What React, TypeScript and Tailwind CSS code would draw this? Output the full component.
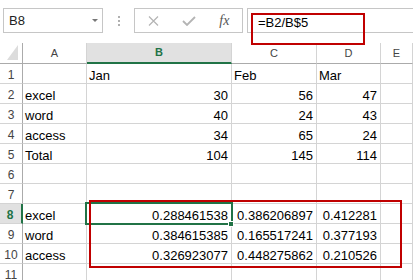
import React from "react";

type Row = { n: number; cells: string[] };

const rows: Row[] = [
  { n: 1, cells: ["", "Jan", "Feb", "Mar", ""] },
  { n: 2, cells: ["excel", "30", "56", "47", ""] },
  { n: 3, cells: ["word", "40", "24", "43", ""] },
  { n: 4, cells: ["access", "34", "65", "24", ""] },
  { n: 5, cells: ["Total", "104", "145", "114", ""] },
  { n: 6, cells: ["", "", "", "", ""] },
  { n: 7, cells: ["", "", "", "", ""] },
  { n: 8, cells: ["excel", "0.288461538", "0.386206897", "0.412281", ""] },
  { n: 9, cells: ["word", "0.384615385", "0.165517241", "0.377193", ""] },
  { n: 10, cells: ["access", "0.326923077", "0.448275862", "0.210526", ""] },
  { n: 11, cells: ["", "", "", "", ""] },
];

const letters = ["A", "B", "C", "D", "E"];
const isNum = (v: string) => /^[\d.]+$/.test(v);

function FormulaBar() {
  return (
    <div className="h-[43px] flex items-start pt-[8px]">
      {/* Name box */}
      <div className="ml-[3px] w-[100px] h-[25px] border border-[#c6c6c6] flex items-center justify-between pl-[5px] pr-[4px] text-[13px] text-[#222]">
        <span>B8</span>
        <svg width="6" height="3" viewBox="0 0 6 3">
          <path d="M0 0H6L3 3Z" fill="#777" />
        </svg>
      </div>
      {/* grip */}
      <div className="w-[31px] h-[25px] flex items-center justify-center">
        <svg width="2" height="10" viewBox="0 0 2 10">
          <rect x="0" y="0" width="2" height="2" fill="#b0b0b0" />
          <rect x="0" y="4" width="2" height="2" fill="#b0b0b0" />
          <rect x="0" y="8" width="2" height="2" fill="#b0b0b0" />
        </svg>
      </div>
      {/* cancel / enter / fx */}
      <div className="w-[109px] h-[25px] border border-[#c6c6c6] flex items-center pl-[1px]">
        <div className="w-[36px] flex justify-center">
          <svg width="11" height="10" viewBox="0 0 11 10">
            <path d="M1 0.5L10 9.5M10 0.5L1 9.5" stroke="#b4b4b4" strokeWidth="1.2" fill="none" />
          </svg>
        </div>
        <div className="w-[36px] flex justify-center">
          <svg width="14" height="10" viewBox="0 0 14 10">
            <path d="M1 5L5 9L13 1" stroke="#b4b4b4" strokeWidth="1.8" fill="none" />
          </svg>
        </div>
        <div className="w-[36px] flex justify-center">
          <span className="font-['Liberation_Serif',serif] italic text-[14px] text-[#555] leading-none">
            fx
          </span>
        </div>
      </div>
      {/* formula input */}
      <div className="ml-[4px] flex-1 h-[25px] border border-r-0 border-[#c6c6c6] pl-[10px] pt-[4px] text-[13px] leading-[20px] text-black whitespace-nowrap">
        =B2/B$5
      </div>
    </div>
  );
}

export default function App() {
  return (
    <div className="relative w-[413px] h-[280px] overflow-hidden bg-white font-['Liberation_Sans',Arial,sans-serif]">
      <FormulaBar />

      <div className="grid grid-cols-[23px_64px_145px_85px_64px_32px]">
        {/* header row */}
        <div className="h-[21px] border-r border-b border-[#ababab] relative">
          <svg className="absolute left-0 top-0" width="23" height="21" viewBox="0 0 23 21">
            <path d="M18 2V17H7Z" fill="#dcdcdc" />
          </svg>
        </div>
        {letters.map((l) =>
          l === "B" ? (
            <div
              key={l}
              className="h-[21px] bg-[#e1e1e1] border-r border-r-[#d4d4d4] border-b-2 border-b-[#217346] text-center text-[11px] leading-[19px] font-bold text-[#217346]"
            >
              {l}
            </div>
          ) : (
            <div
              key={l}
              className="h-[21px] border-r border-r-[#d4d4d4] border-b border-b-[#ababab] text-center text-[11px] leading-[20px] text-[#444]"
            >
              {l}
            </div>
          )
        )}

        {rows.map((r) => (
          <React.Fragment key={r.n}>
            {r.n === 8 ? (
              <div className="h-[20px] bg-[#e1e1e1] border-r-2 border-r-[#217346] border-b border-b-[#d4d4d4] text-center text-[12px] leading-[17px] pt-[3px] pr-[1px] font-bold text-[#217346]">
                {r.n}
              </div>
            ) : (
              <div className="h-[20px] border-r border-r-[#ababab] border-b border-b-[#d4d4d4] text-center text-[12px] leading-[17px] pt-[3px] text-[#444]">
                {r.n}
              </div>
            )}
            {r.cells.map((v, i) => (
              <div
                key={i}
                className={
                  isNum(v)
                    ? "h-[20px] border-r border-b border-[#d4d4d4] text-right pr-[3px] text-[13px] leading-[17px] pt-[3px] text-black whitespace-nowrap overflow-hidden"
                    : "h-[20px] border-r border-b border-[#d4d4d4] text-left pl-[2px] text-[13px] leading-[17px] pt-[3px] text-black whitespace-nowrap overflow-hidden"
                }
              >
                {v}
              </div>
            ))}
          </React.Fragment>
        ))}
      </div>

      {/* active cell B8 */}
      <div className="absolute left-[85px] top-[202px] w-[148px] h-[23px] border-2 border-[#217346]" />
      <div className="absolute left-[228px] top-[221px] w-[6px] h-[6px] bg-[#217346] border border-white" />

      {/* red highlight boxes */}
      <div className="absolute left-[251px] top-[13px] w-[114px] h-[32px] border-2 border-[#c00000]" />
      <div className="absolute left-[89px] top-[200px] w-[313px] h-[68px] border-2 border-[#c00000]" />
    </div>
  );
}
